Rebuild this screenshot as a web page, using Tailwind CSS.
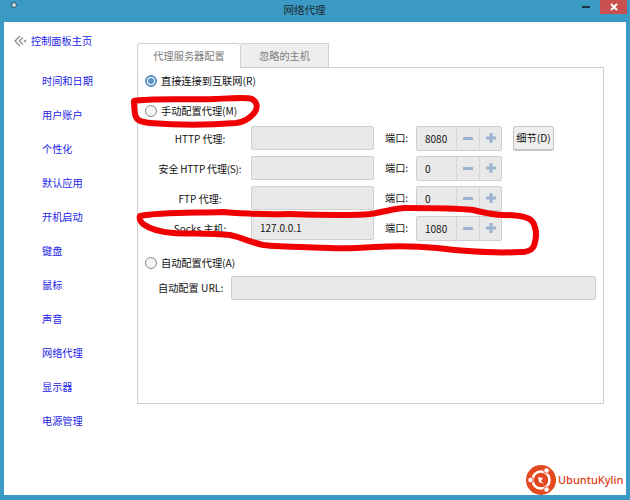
<!DOCTYPE html>
<html lang="zh-CN">
<head>
  <meta charset="UTF-8" />
  <title>网络代理</title>
  <script src="https://cdn.jsdelivr.net/npm/@tailwindcss/browser@4"></script>
</head>
<body class="bg-[#3b9ac3] font-['Noto_Sans_CJK_SC','Noto_Sans',sans-serif] text-[10.2px] text-[#111]">
<div class="relative w-[630px] h-[500px] overflow-hidden flex flex-col">

  <!-- Title bar -->
  <div class="h-[22px] shrink-0 flex items-start">
    <div class="ml-[11px] mt-[2px] w-[6px] h-[6px] rounded-full bg-[#c8d8e0] border border-[#31566a]"></div>
    <div class="flex-1 pl-[10px] mt-[2px] text-center text-[#1c2c34] text-[10.5px] leading-[15px]">网络代理</div>
    <div class="flex items-start">
      <div class="w-[8px] h-[2px] bg-[#1d3442] mt-[6px] mr-[10px]"></div>
      <div class="w-[27px] h-[14px] mr-[3px] bg-[#c9504f] text-white flex items-center justify-center">
        <svg width="8" height="8" viewBox="0 0 8 8"><path d="M1 1l6 6M7 1l-6 6" stroke="#fff" stroke-width="2"/></svg>
      </div>
    </div>
  </div>

  <!-- Window body -->
  <div class="mx-[4px] h-[473px] bg-white flex">

    <!-- Sidebar -->
    <div class="w-[133px] shrink-0 text-[#2525e6]">
      <div class="flex items-center h-[20px] mt-[9px] ml-[9px] gap-[4px]">
        <svg width="14" height="14" viewBox="0 0 14 14" fill="none" stroke="#8a8f92" stroke-width="1.3"><path d="M7 2L2 7l5 5M10 3.500L6.500 7l3.500 3.500M13 6l-1.500 1 1.500 1"/></svg>
        <span>控制面板主页</span>
      </div>
      <ul class="mt-[20px] ml-[38px] flex flex-col gap-[14px] leading-[20px]">
        <li>时间和日期</li>
        <li>用户账户</li>
        <li>个性化</li>
        <li>默认应用</li>
        <li>开机启动</li>
        <li>键盘</li>
        <li>鼠标</li>
        <li>声音</li>
        <li>网络代理</li>
        <li>显示器</li>
        <li>电源管理</li>
      </ul>
    </div>

    <!-- Tabs and panel -->
    <div class="w-[467px] mt-[21px]">
      <div class="flex h-[24px] text-[#7d7d7d]">
        <div class="w-[104px] h-[25px] relative z-10 bg-white border border-[#d2d2d2] border-b-0 rounded-t-[3px] flex items-center justify-center">代理服务器配置</div>
        <div class="w-[88px] h-[24px] bg-[#eeeeee] border-t border-r border-[#d2d2d2] flex items-center justify-center">忽略的主机</div>
      </div>
      <div class="h-[337px] border border-[#d0d0d0] pl-[7px] relative">

        <div class="flex items-center h-[20px] mt-[3px] gap-[4px]">
          <div class="w-[12px] h-[12px] rounded-full border-[2px] border-[#5d92c4] bg-white flex items-center justify-center">
            <div class="w-[6px] h-[6px] rounded-full bg-[#5d92c4]"></div>
          </div>
          <span>直接连接到互联网(R)</span>
        </div>

        <div class="flex items-center h-[20px] mt-[10px] gap-[4px]">
          <div class="w-[12px] h-[12px] rounded-full border border-[#8c8c8c] bg-[#f4f4f4]"></div>
          <span>手动配置代理(M)</span>
        </div>

        <div class="mt-[5px] flex flex-col gap-[6px]">
          <!-- HTTP -->
          <div class="flex items-center h-[24px]">
            <div class="w-[106px] text-center pl-[4px] text-[10px]">HTTP 代理:</div>
            <div class="w-[123px] h-[24px] bg-[#e9e9e9] border border-[#cfcfcf] rounded-[2px]"></div>
            <div class="ml-[11px] w-[31px]">端口:</div>
            <div class="w-[86px] h-[25px] flex bg-[#e9e9e9] border border-[#cfcfcf] rounded-[2px]">
              <div class="w-[39px] pl-[8px] leading-[23px] text-[10px]">8080</div>
              <div class="w-[23px] border-l border-[#d6d6d6] flex items-center justify-center"><div class="w-[10px] h-[3px] bg-[#9cb4cf]"></div></div>
              <div class="w-[22px] border-l border-[#d6d6d6] flex items-center justify-center"><svg width="10" height="10" viewBox="0 0 10 10"><path d="M5 0v10M0 5h10" stroke="#9cb4cf" stroke-width="3"/></svg></div>
            </div>
            <button class="ml-[11px] w-[41px] h-[25px] bg-[#efefef] border border-[#c4c4c4] border-b-2 rounded-[3px]">细节(D)</button>
          </div>
          <!-- Secure HTTP -->
          <div class="flex items-center h-[24px]">
            <div class="w-[106px] text-center pl-[4px] whitespace-nowrap text-[10px] tracking-[-0.2px]">安全 HTTP 代理(S):</div>
            <div class="w-[123px] h-[24px] bg-[#e9e9e9] border border-[#cfcfcf] rounded-[2px]"></div>
            <div class="ml-[11px] w-[31px]">端口:</div>
            <div class="w-[86px] h-[25px] flex bg-[#e9e9e9] border border-[#cfcfcf] rounded-[2px]">
              <div class="w-[39px] pl-[8px] leading-[23px] text-[10px]">0</div>
              <div class="w-[23px] border-l border-[#d6d6d6] flex items-center justify-center"><div class="w-[10px] h-[3px] bg-[#9cb4cf]"></div></div>
              <div class="w-[22px] border-l border-[#d6d6d6] flex items-center justify-center"><svg width="10" height="10" viewBox="0 0 10 10"><path d="M5 0v10M0 5h10" stroke="#9cb4cf" stroke-width="3"/></svg></div>
            </div>
          </div>
          <!-- FTP -->
          <div class="flex items-center h-[24px]">
            <div class="w-[106px] text-center pl-[4px] text-[10px]">FTP 代理:</div>
            <div class="w-[123px] h-[24px] bg-[#e9e9e9] border border-[#cfcfcf] rounded-[2px]"></div>
            <div class="ml-[11px] w-[31px]">端口:</div>
            <div class="w-[86px] h-[25px] flex bg-[#e9e9e9] border border-[#cfcfcf] rounded-[2px]">
              <div class="w-[39px] pl-[8px] leading-[23px] text-[10px]">0</div>
              <div class="w-[23px] border-l border-[#d6d6d6] flex items-center justify-center"><div class="w-[10px] h-[3px] bg-[#9cb4cf]"></div></div>
              <div class="w-[22px] border-l border-[#d6d6d6] flex items-center justify-center"><svg width="10" height="10" viewBox="0 0 10 10"><path d="M5 0v10M0 5h10" stroke="#9cb4cf" stroke-width="3"/></svg></div>
            </div>
          </div>
          <!-- Socks -->
          <div class="flex items-center h-[24px]">
            <div class="w-[106px] text-center pl-[4px] text-[10px]">Socks 主机:</div>
            <div class="w-[123px] h-[24px] bg-[#e9e9e9] border border-[#cfcfcf] rounded-[2px] pl-[8px] leading-[22px] text-[10px]">127.0.0.1</div>
            <div class="ml-[11px] w-[31px]">端口:</div>
            <div class="w-[86px] h-[25px] flex bg-[#e9e9e9] border border-[#cfcfcf] rounded-[2px]">
              <div class="w-[39px] pl-[8px] leading-[23px] text-[10px]">1080</div>
              <div class="w-[23px] border-l border-[#d6d6d6] flex items-center justify-center"><div class="w-[10px] h-[3px] bg-[#9cb4cf]"></div></div>
              <div class="w-[22px] border-l border-[#d6d6d6] flex items-center justify-center"><svg width="10" height="10" viewBox="0 0 10 10"><path d="M5 0v10M0 5h10" stroke="#9cb4cf" stroke-width="3"/></svg></div>
            </div>
          </div>
        </div>

        <div class="flex items-center h-[20px] mt-[13px] gap-[4px]">
          <div class="w-[12px] h-[12px] rounded-full border border-[#8c8c8c] bg-[#f4f4f4]"></div>
          <span>自动配置代理(A)</span>
        </div>

        <div class="flex items-center h-[24px] mt-[3px]">
          <div class="ml-[13px] w-[73px] whitespace-nowrap">自动配置 URL:</div>
          <div class="w-[365px] h-[24px] bg-[#e9e9e9] border border-[#cfcfcf] rounded-[2px]"></div>
        </div>
      </div>
    </div>
  </div>

  <!-- Red annotations drawn over the window -->
  <svg class="absolute inset-0 pointer-events-none" width="630" height="500" viewBox="0 0 630 500" fill="none" stroke="#f00000" stroke-width="6" stroke-linejoin="round" stroke-linecap="round">
    <path d="M134 101C150 98 180 100 215 99C235 98 248 97 252 99C257 102 258 107 255 112C251 117 245 122 236 123C210 125 175 125 150 123C140 122 136 120 135 114C134 108 134 104 134 101Z"/>
    <path d="M140 216C160 212 190 213 223 212C250 214 270 215 287 214C320 215 350 216 370 214C385 212 395 208 405 208C430 208 455 208 473 210C485 213 495 215 503 215C518 215 528 217 532 221C536 226 537 235 535 242C534 249 530 252 520 252C500 253 470 252 437 248C415 246 395 246 375 247C360 248 345 249 330 248C305 247 280 247 263 245C250 242 240 237 230 235C210 233 190 234 173 233C160 232 150 229 143 224C140 221 139 219 140 216Z"/>
  </svg>

  <!-- Watermark logo -->
  <div class="absolute left-[526px] top-[465px] flex items-center gap-[2px]">
    <svg width="30" height="30" viewBox="0 0 30 30">
      <circle cx="15" cy="15" r="15" fill="#e2491e"/>
      <circle cx="15" cy="15" r="8.500" fill="none" stroke="#fff" stroke-width="2.500"/>
      <circle cx="20.500" cy="5.500" r="2.800" fill="#fff" stroke="#e2491e"/>
      <circle cx="20.500" cy="24.500" r="2.800" fill="#fff" stroke="#e2491e"/>
      <circle cx="4.500" cy="15" r="2.800" fill="#fff" stroke="#e2491e"/>
      <path d="M12 12l5 1-2 3 3 3-5-2z" fill="#fff"/>
    </svg>
    <span class="text-[11px] leading-[30px] text-[#dd3c16] font-['Noto_Sans',sans-serif] font-medium whitespace-nowrap">UbuntuKylin</span>
  </div>
</div>
</body>
</html>
